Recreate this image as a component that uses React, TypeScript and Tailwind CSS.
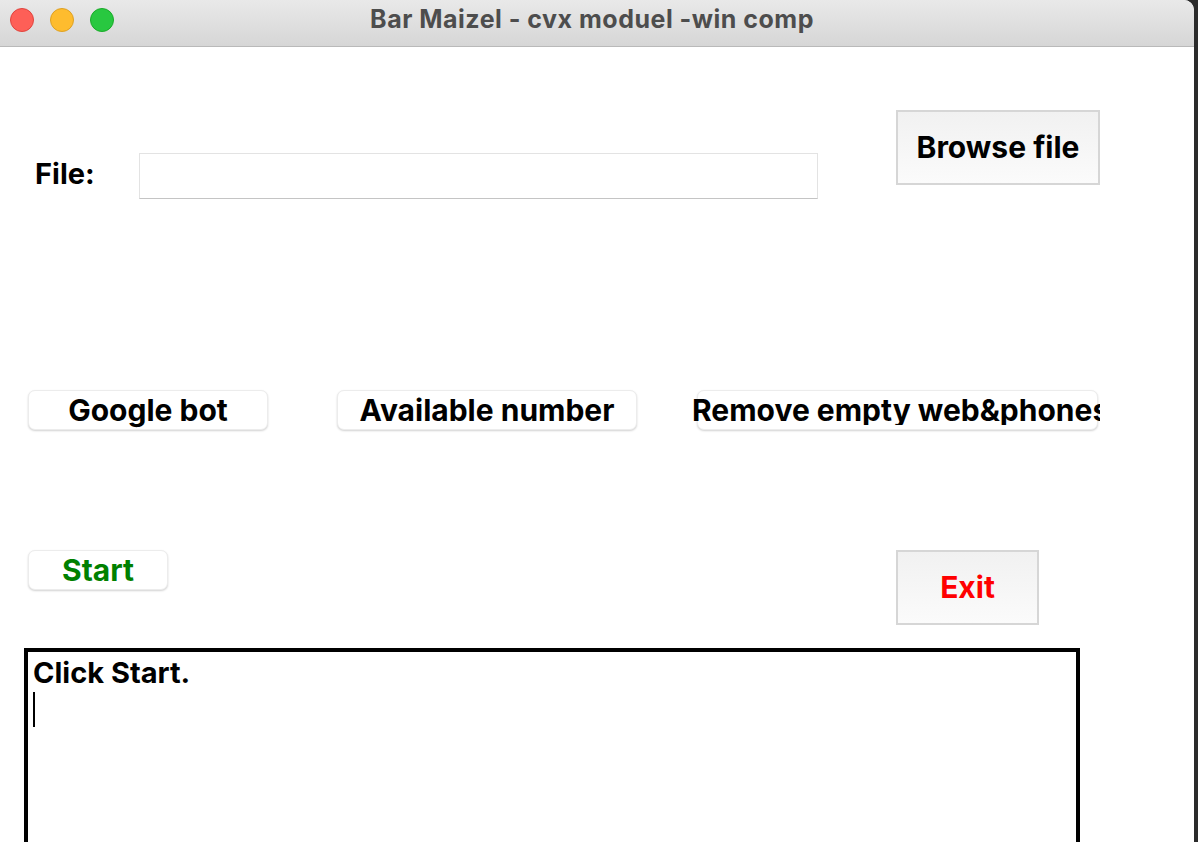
import React from 'react';

const font = { fontFamily: 'Inter, "Liberation Sans", Arial, sans-serif' };

export default function App() {
  return (
    <div className="w-[1198px] h-[842px] bg-[#2b2b2b] flex overflow-hidden" style={font}>
      <div className="w-[1194px] h-[842px] bg-white rounded-tr-[10px] overflow-hidden flex flex-col">
        {/* Title bar */}
        <div className="h-[47px] shrink-0 bg-gradient-to-b from-[#e9e9e9] to-[#d6d6d6] border-b border-[#b9b9b9] flex items-center relative">
          <div className="flex items-center gap-[16px] pl-[10px] pb-[6px]">
            <span className="w-[24px] h-[24px] rounded-full bg-[#fe5f57] border border-[#e0443e]"></span>
            <span className="w-[24px] h-[24px] rounded-full bg-[#febc2e] border border-[#dea123]"></span>
            <span className="w-[24px] h-[24px] rounded-full bg-[#28c840] border border-[#1aab29]"></span>
          </div>
          <div className="absolute inset-0 flex items-center justify-center pb-[7px] pr-[10px] pointer-events-none">
            <span className="text-[25px] font-bold text-[#4d4d4d] tracking-[0.5px]">Bar Maizel - cvx moduel -win comp</span>
          </div>
        </div>

        {/* Content */}
        <div className="flex-1 px-[28px] pt-[63px] flex flex-col">
          {/* File row */}
          <div className="flex items-start">
            <div className="w-[111px] h-[45px] mt-[43px] flex items-center pl-[7px] pb-[3px]">
              <span className="text-[29px] font-bold text-black">File:</span>
            </div>
            <div className="w-[679px] h-[46px] mt-[43px] bg-white border border-[#e3e3e3] border-b-[#c4c4c4]"></div>
            <button className="ml-[78px] w-[204px] h-[75px] border-2 border-[#d6d6d6] bg-gradient-to-b from-[#f1f1f1] to-[#fbfbfb] text-[30px] font-bold text-black">
              Browse file
            </button>
          </div>

          {/* Action buttons */}
          <div className="flex items-start mt-[191px]">
            <button className="w-[240px] h-[40px] rounded-[7px] bg-white border border-[#ececec] shadow-[0_1px_2px_rgba(0,0,0,0.18)] text-[30px] font-bold text-black leading-none">
              Google bot
            </button>
            <button className="ml-[69px] w-[300px] h-[40px] rounded-[7px] bg-white border border-[#ececec] shadow-[0_1px_2px_rgba(0,0,0,0.18)] text-[30px] font-bold text-black leading-none">
              Available number
            </button>
            <button className="ml-[60px] w-[401px] h-[40px] rounded-[7px] bg-white border border-[#ececec] shadow-[0_1px_2px_rgba(0,0,0,0.18)] text-[30px] font-bold text-black leading-none flex items-center justify-start">
              <span className="-ml-[6px] w-[408px] shrink-0 overflow-hidden whitespace-nowrap text-left">Remove empty web&amp;phones</span>
            </button>
          </div>

          {/* Start / Exit */}
          <div className="flex items-start mt-[120px]">
            <button className="w-[140px] h-[40px] rounded-[7px] bg-white border border-[#ececec] shadow-[0_1px_2px_rgba(0,0,0,0.18)] text-[30px] font-bold text-[#008000] leading-none">
              Start
            </button>
            <button className="ml-[728px] w-[143px] h-[75px] border-2 border-[#d6d6d6] bg-gradient-to-b from-[#f1f1f1] to-[#fbfbfb] text-[30px] font-bold text-[#ff0000]">
              Exit
            </button>
          </div>

          {/* Log area */}
          <div className="mt-[23px] -ml-[4px] w-[1056px] h-[300px] shrink-0 border-4 border-black bg-white px-[5px] pt-[5px]">
            <div className="text-[29px] font-bold text-black leading-[32px]">Click Start.</div>
            <div className="w-[2px] h-[35px] bg-black mt-[3px]"></div>
          </div>
        </div>
      </div>
    </div>
  );
}
